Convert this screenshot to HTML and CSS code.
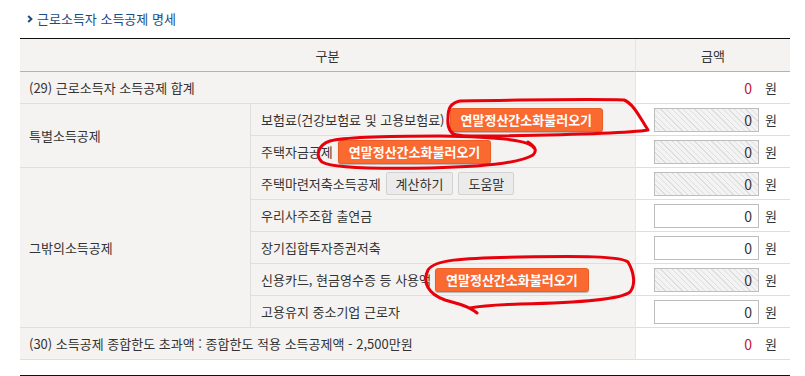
FILE: index.html
```html
<!DOCTYPE html>
<html lang="ko">
<head>
<meta charset="utf-8">
<title>근로소득자 소득공제 명세</title>
<link rel="stylesheet" href="styles.css">
</head>
<body>
<div class="page">
  <h2 class="title"><svg class="bullet" width="6" height="8" viewBox="0 0 6 8"><polyline points="1.2,1 4.4,4 1.2,7" fill="none" stroke="#1c4b82" stroke-width="2"/></svg>근로소득자 소득공제 명세</h2>
  <div class="grid">
    <div class="th span2">구분</div>
    <div class="th c3">금액</div>

    <div class="td span2 lead">(29) 근로소득자 소득공제 합계</div>
    <div class="td amt"><span class="val red">0</span><span class="unit">원</span></div>

    <div class="td cat r2">특별소득공제</div>
    <div class="td item">보험료(건강보험료 및 고용보험료)<button class="btn-o">연말정산간소화불러오기</button></div>
    <div class="td amt"><input class="box dis" value="0" readonly><span class="unit">원</span></div>

    <div class="td item">주택자금공제<button class="btn-o">연말정산간소화불러오기</button></div>
    <div class="td amt"><input class="box dis" value="0" readonly><span class="unit">원</span></div>

    <div class="td cat r5">그밖의소득공제</div>
    <div class="td item">주택마련저축소득공제<button class="btn-g">계산하기</button><button class="btn-g">도움말</button></div>
    <div class="td amt"><input class="box dis" value="0" readonly><span class="unit">원</span></div>

    <div class="td item">우리사주조합 출연금</div>
    <div class="td amt"><input class="box" value="0"><span class="unit">원</span></div>

    <div class="td item">장기집합투자증권저축</div>
    <div class="td amt"><input class="box" value="0"><span class="unit">원</span></div>

    <div class="td item">신용카드, 현금영수증 등 사용액<button class="btn-o over">연말정산간소화불러오기</button></div>
    <div class="td amt"><input class="box dis" value="0" readonly><span class="unit">원</span></div>

    <div class="td item">고용유지 중소기업 근로자</div>
    <div class="td amt"><input class="box" value="0"><span class="unit">원</span></div>

    <div class="td span2 lead">(30) 소득공제 종합한도 초과액 : 종합한도 적용 소득공제액 - 2,500만원</div>
    <div class="td amt"><span class="val red">0</span><span class="unit">원</span></div>
  </div>
  <div class="endline"></div>
</div>
<svg class="marks" width="805" height="376" viewBox="0 0 805 376">
  <path d="M458 136 C451 134 447 128 448 118 C448 109 450 103 460 101 C520 100 590 99 624 100 C634 104 640 118 648 130 C630 133 560 135 490 136 C470 136 455 137 452 133"/>
  <path d="M534 148 C530 140 500 137 440 136 C390 136 345 137 330 141 C318 145 315 156 322 162 C332 168 380 169 430 168 C480 167 520 163 533 155 C537 151 536 147 528 142"/>
  <path d="M477 313 C470 307 460 304 445 300 C428 294 422 282 428 270 C434 260 460 258 520 257 C580 256 620 256 628 262 C634 272 636 285 630 292 C620 300 570 303 520 304 C500 305 485 305 470 308"/>
</svg>
</body>
</html>
```

FILE: styles.css
```css
* { box-sizing: border-box; }
html, body { margin: 0; padding: 0; background: #fff; }
body {
  position: relative;
  width: 805px;
  height: 376px;
  overflow: hidden;
  font-family: "Noto Sans CJK KR", "Noto Sans", sans-serif;
  font-size: 13px;
  color: #333;
}
.page { padding-left: 20px; }
.title {
  margin: 0;
  height: 38px;
  display: flex;
  align-items: center;
  padding: 0 0 1px 7px;
  font-size: 13px;
  font-weight: normal;
  color: #1c4b82;
}
.bullet { margin-right: 4px; }
.grid {
  width: 770px;
  display: grid;
  grid-template-columns: 231px 385px 154px;
  grid-template-rows: 33px repeat(9, 32px);
  border-top: 1px solid #111;
}
.th {
  background: #f4f3f1;
  border-bottom: 1px solid #b3b3b3;
  display: flex;
  align-items: center;
  justify-content: center;
}
.th.span2 { border-right: 1px solid #e4e4e4; }
.span2 { grid-column: span 2; }
.td {
  border-bottom: 1px solid #dedede;
  display: flex;
  align-items: center;
}
.lead {
  background: #f4f3f1;
  padding-left: 9px;
  border-right: 1px solid #e4e4e4;
}
.cat {
  background: #f4f3f1;
  padding-left: 9px;
  border-right: 1px solid #dedede;
}
.r2 { grid-row: span 2; }
.r5 { grid-row: span 5; }
.item {
  background: #f4f3f1;
  padding-left: 10px;
  border-right: 1px solid #e4e4e4;
  white-space: nowrap;
}
.amt {
  justify-content: flex-end;
  padding-right: 13px;
  background: #fff;
}
.unit { margin-left: 6px; font-size: 13px; color: #333; }
.val {
  display: inline-block;
  width: 105px;
  text-align: right;
  padding-right: 7px;
  font-size: 14px;
}
.red { color: #c4142e; }
.box {
  width: 105px;
  height: 24px;
  border: 1px solid #bdbdbd;
  padding: 0 6px;
  text-align: right;
  font-family: "Noto Sans CJK KR", "Noto Sans", sans-serif;
  font-size: 14px;
  color: #333;
  background: #fff;
  outline: none;
}
.box.dis {
  background: repeating-linear-gradient(45deg, #f3f3f3 0 3px, #dedede 3px 4px);
}
button {
  font-family: "Noto Sans CJK KR", "Noto Sans", sans-serif;
  font-size: 13px;
  cursor: pointer;
  padding: 0 10px;
  line-height: 1;
}
.btn-o {
  height: 24px;
  margin-left: 5px;
  background: #fa6a30;
  color: #fff;
  font-weight: bold;
  border: 1px solid #e95e26;
  border-radius: 3px;
  box-shadow: 0 1px 1px rgba(0,0,0,0.25);
}
.btn-o.over { margin-left: 4px; }
.btn-g {
  height: 23px;
  margin-left: 5px;
  padding: 0 9px;
  background: #ebebeb;
  color: #333;
  border: 1px solid #d2d2d2;
  border-radius: 2px;
}
.btn-g:first-of-type { margin-left: 5px; }
.endline {
  width: 770px;
  margin-top: 15px;
  border-top: 1px solid #111;
}
.marks {
  position: absolute;
  top: 0;
  left: 0;
  pointer-events: none;
}
.marks path {
  fill: none;
  stroke: #e8000b;
  stroke-width: 3;
  stroke-linecap: round;
  stroke-linejoin: round;
}
```
